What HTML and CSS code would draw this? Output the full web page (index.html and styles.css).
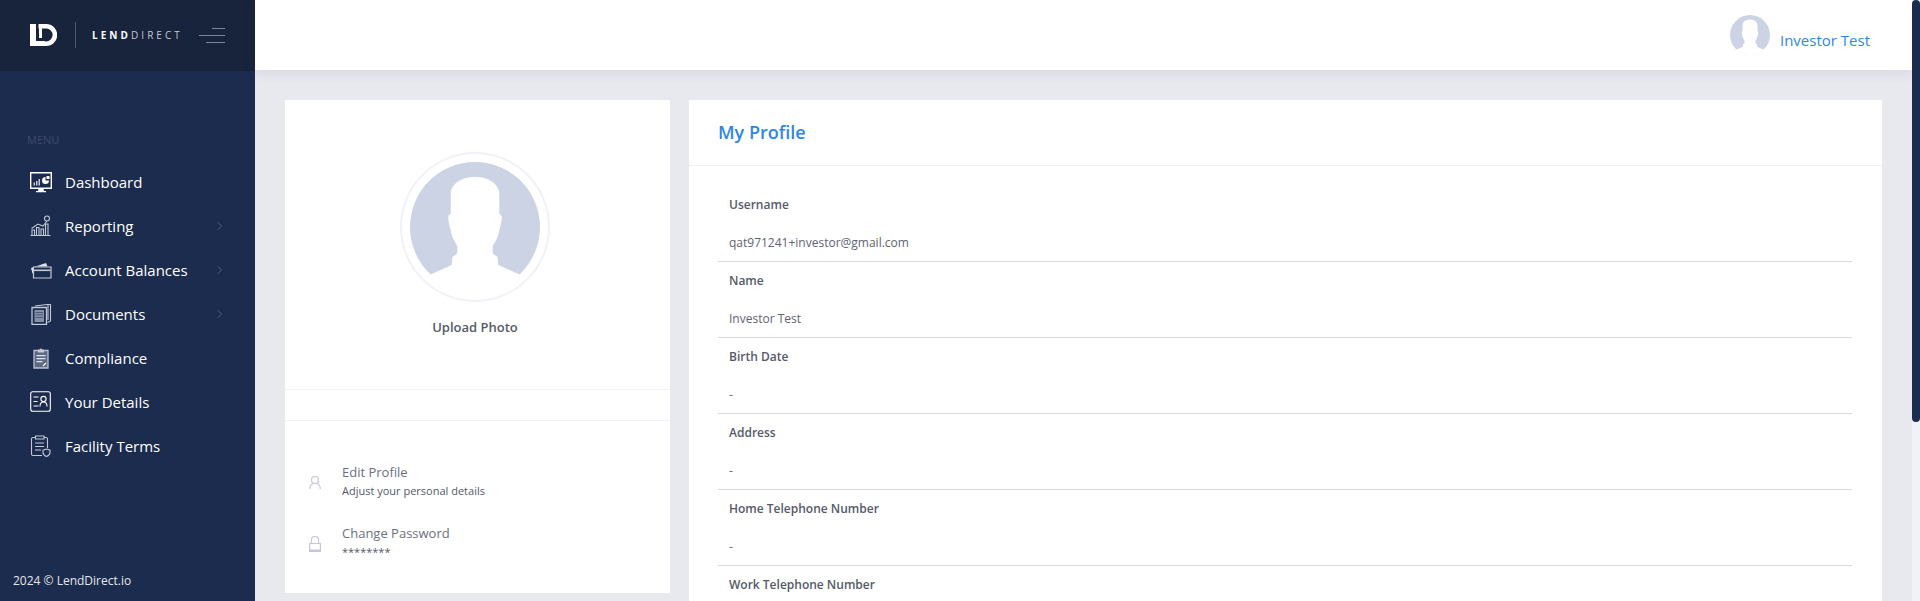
FILE: index.html

```html
<!DOCTYPE html>
<html lang="en">
<head>
    <meta charset="UTF-8">
    <title>LendDirect - My Profile</title>
    <link rel="stylesheet" href="styles.css">
</head>
<body>
    <svg class="defs" width="0" height="0">
        <symbol id="avatar" viewBox="0 0 150 150">
            <circle cx="75" cy="75" r="65" fill="#cbd3e4"/>
            <path fill="#fff" d="M29.5 123L51.7 113C52 109 52 106 52.7 104.7C54 103.5 57.3 103 57.3 100V94C55 90 51.5 85 50.7 78C49.5 74 48 68 48.3 64.7C48.5 63 50 62 50.7 62V41.3C51 33 60 25 75 24.7C90 25 99 33 99.3 41.3V62C100 62 101.5 63 101.7 64.7C102 68 100.5 74 99.3 78C98.5 85 95 90 92.7 94V100C92.7 103 96 103.5 97.3 104.7C98 106 98 109 98.3 113L120.5 123A66.2 66.2 0 0 1 29.5 123z"/>
        </symbol>
    </svg>

    <div class="layout">
        <aside class="sidebar">
            <div class="brand">
                <svg class="brand-mark" viewBox="0 0 27 22" width="27" height="22">
                    <path fill="#fff" d="M0 0h6v17h9v5H0z"/>
                    <path fill="none" stroke="#fff" stroke-width="4.6" d="M8.5 2.3h7.7a8.7 8.7 0 0 1 0 17.4H14"/>
                    <path fill="#fff" d="M9 2h3v12H9z"/>
                </svg>
                <span class="brand-line"></span>
                <span class="brand-name"><b>LEND</b>DIRECT</span>
                <span class="burger"><i></i><i></i><i></i></span>
            </div>

            <div class="menu-title">MENU</div>
            <nav class="menu">
                <a class="menu-item">
                    <svg class="menu-icon" viewBox="0 0 22 22" width="22" height="22">
                        <path fill="none" stroke="#fff" stroke-width="1.4" d="M.7 1.7h20.6v15.6H.7z"/>
                        <path fill="#fff" d="M8.5 17.5h5l.5 2.5h2v1.2H6V20h2z"/>
                        <path fill="#c5cad6" d="M3.5 11.5h1.500v3H3.500zM6 10h1.500v4.500H6zM8.500 8h1.500v6.500H8.500z"/>
                        <path fill="#fff" d="M15.500 6v3.500h3.500a3.500 3.500 0 1 1-3.500-3.500zM16.500 5h3v3h-3z"/>
                    </svg>
                    <span>Dashboard</span>
                </a>
                <a class="menu-item">
                    <svg class="menu-icon dim" viewBox="0 0 22 22" width="22" height="22">
                        <g fill="none" stroke="#c3c8d3" stroke-width="1.100">
                            <path d="M.5 20.500h20M2 20v-5h2.500v5M6.500 20v-7.500H9V20M11 20v-6h2.500v6M15.500 20V9H18v11"/>
                            <path d="M1.500 13.500L8 9l5 2 4-5"/>
                            <circle cx="17" cy="3.500" r="2.500"/>
                        </g>
                    </svg>
                    <span>Reporting</span>
                    <i class="chevron"></i>
                </a>
                <a class="menu-item">
                    <svg class="menu-icon" viewBox="0 0 22 22" width="22" height="22">
                        <path fill="#e3e6ec" d="M1 9l15-5 1.500 3.500H6v1.700L4 14.500H2.500z"/>
                        <path fill="#1c2c4e" stroke="#c3c8d3" stroke-width="1.200" d="M3.500 8h17.500v11H3.500z"/>
                        <path fill="#c3c8d3" d="M4 10.500h16.500v1.600H4z"/>
                    </svg>
                    <span>Account Balances</span>
                    <i class="chevron"></i>
                </a>
                <a class="menu-item">
                    <svg class="menu-icon dim" viewBox="0 0 22 22" width="22" height="22">
                        <path fill="none" stroke="#c3c8d3" stroke-width="1.100" d="M5 3l12-1.500h3.500V18l-3 1.500M18 1.700V17"/>
                        <path fill="#1c2c4e" stroke="#c3c8d3" stroke-width="1.300" d="M2 4.500h14.500v17H2z"/>
                        <path fill="#8690a6" d="M4.500 7h9.500v12H4.500z"/>
                        <path fill="#39486a" d="M5.500 9h7.500v.800H5.500zM5.500 11.500h7.500v.800H5.500zM5.500 14h7.500v.800H5.500z"/>
                    </svg>
                    <span>Documents</span>
                    <i class="chevron"></i>
                </a>
                <a class="menu-item">
                    <svg class="menu-icon dim" viewBox="0 0 22 22" width="22" height="22">
                        <path fill="#5d6a85" stroke="#b9c0cd" stroke-width="1.300" d="M4 3.500h14v17.500H4z"/>
                        <path fill="#c3c8d3" d="M8 2.500h2l1-1.500 1 1.500h2v3H8z"/>
                        <path fill="#dfe2e9" d="M6.500 8h9v1.200h-9zM6.500 11h9v1.200h-9zM6.500 14h6v1.200h-6z"/>
                        <path fill="none" stroke="#fff" stroke-width="1.200" d="M13 19l3-3"/>
                    </svg>
                    <span>Compliance</span>
                </a>
                <a class="menu-item">
                    <svg class="menu-icon" viewBox="0 0 22 22" width="22" height="22">
                        <rect x=".7" y=".7" width="19.600" height="19.600" rx="2" fill="none" stroke="#fff" stroke-width="1.100"/>
                        <path fill="none" stroke="#fff" stroke-width="1.100" d="M3.500 6h5M3.500 10.500h4M3.500 15h5"/>
                        <circle cx="13.500" cy="8" r="2.600" fill="none" stroke="#fff" stroke-width="1.100"/>
                        <path fill="none" stroke="#fff" stroke-width="1.100" d="M10 15.500c0-6 7-6 7 0"/>
                    </svg>
                    <span>Your Details</span>
                </a>
                <a class="menu-item">
                    <svg class="menu-icon dim" viewBox="0 0 22 22" width="22" height="22">
                        <path fill="none" stroke="#c3c8d3" stroke-width="1.100" d="M12 20.500H3c-1 0-1.500-.5-1.500-1.500V4c0-1 .5-1.500 1.500-1.500h2M14 2.500h2c1 0 1.500.5 1.500 1.500v9"/>
                        <path fill="none" stroke="#c3c8d3" stroke-width="1.100" d="M5.500 1h8.500v3H5.500zM5 8h9M5 11.500h9M5 15h6"/>
                        <path fill="none" stroke="#c3c8d3" stroke-width="1.100" d="M16.500 14l3.500 1.200v2.300c0 2-1.500 3.200-3.500 4-2-.8-3.500-2-3.500-4v-2.300z"/>
                    </svg>
                    <span>Facility Terms</span>
                </a>
            </nav>
            <div class="copyright">2024 © LendDirect.io</div>
        </aside>

        <div class="page">
            <header class="topbar">
                <svg class="top-avatar" width="46" height="46"><use href="#avatar"/></svg>
                <span class="top-user">Investor Test</span>
            </header>

            <main class="content">
                <section class="card side-card">
                    <div class="photo">
                        <div class="photo-ring"><svg width="150" height="150"><use href="#avatar"/></svg></div>
                        <div class="photo-label">Upload Photo</div>
                    </div>
                    <div class="side-gap"></div>
                    <div class="side-links">
                        <div class="side-link">
                            <svg class="side-icon" viewBox="0 0 12 16" width="12" height="16">
                                <circle cx="6" cy="5" r="3.500" fill="none" stroke="#c6c5dc" stroke-width="1.200"/>
                                <path fill="none" stroke="#c6c5dc" stroke-width="1.200" d="M.7 14c0-3 2-5 3.300-5.500M11.300 14c0-3-2-5-3.300-5.500"/>
                            </svg>
                            <div>
                                <div class="side-title">Edit Profile</div>
                                <div class="side-sub">Adjust your personal details</div>
                            </div>
                        </div>
                        <div class="side-link">
                            <svg class="side-icon" viewBox="0 0 12 16" width="12" height="16">
                                <path fill="none" stroke="#c6c5dc" stroke-width="1.200" d="M2.500 8V4a3.500 3.500 0 0 1 7 0v4"/>
                                <path fill="#fff" stroke="#c6c5dc" stroke-width="1.200" d="M.6 7.500h10.800v7.900H.6z"/>
                                <path fill="#c6c5dc" d="M.6 13.500h10.800v1.900H.6z"/>
                            </svg>
                            <div>
                                <div class="side-title">Change Password</div>
                                <div class="side-sub">********</div>
                            </div>
                        </div>
                    </div>
                </section>

                <section class="card profile-card">
                    <h1 class="profile-head">My Profile</h1>
                    <div class="fields">
                        <div class="field">
                            <div class="field-label">Username</div>
                            <div class="field-value">qat971241+investor@gmail.com</div>
                        </div>
                        <div class="field">
                            <div class="field-label">Name</div>
                            <div class="field-value">Investor Test</div>
                        </div>
                        <div class="field">
                            <div class="field-label">Birth Date</div>
                            <div class="field-value">-</div>
                        </div>
                        <div class="field">
                            <div class="field-label">Address</div>
                            <div class="field-value">-</div>
                        </div>
                        <div class="field">
                            <div class="field-label">Home Telephone Number</div>
                            <div class="field-value">-</div>
                        </div>
                        <div class="field">
                            <div class="field-label">Work Telephone Number</div>
                        </div>
                    </div>
                </section>
            </main>
        </div>

        <div class="scrollbar"><div class="scroll-thumb"></div></div>
    </div>
</body>
</html>
```

FILE: styles.css

```css
html, body {
    margin: 0;
    padding: 0;
    height: 100%;
    overflow: hidden;
    font-family: "Open Sans", "Noto Sans", sans-serif;
    background-color: #e8e9ef;
}
.defs {
    position: absolute;
}
.layout {
    display: flex;
    height: 100vh;
    position: relative;
}

/* sidebar */
.sidebar {
    width: 255px;
    flex: none;
    background-color: #1c2c4e;
    display: flex;
    flex-direction: column;
}
.brand {
    height: 71px;
    flex: none;
    background-color: #18233c;
    display: flex;
    align-items: center;
    padding: 0 0 1px 30px;
    box-sizing: border-box;
}
.brand-mark {
    flex: none;
}
.brand-line {
    width: 1px;
    height: 26px;
    margin-left: 18px;
    background-color: #4b566f;
}
.brand-name {
    margin-left: 16px;
    font-size: 10px;
    letter-spacing: 3.05px;
    color: #c5c8d0;
    width: 107px;
    white-space: nowrap;
}
.brand-name b {
    color: #fff;
    font-weight: 700;
}
.burger {
    display: flex;
    flex-direction: column;
    align-items: flex-end;
    gap: 6px;
    width: 26px;
}
.burger i {
    display: block;
    height: 1px;
    background-color: #7d8699;
}
.burger i:nth-child(1) {
    width: 13px;
}
.burger i:nth-child(2) {
    width: 26px;
}
.burger i:nth-child(3) {
    width: 19px;
}
.menu-title {
    margin: 61px 0 0 27px;
    font-size: 11px;
    line-height: 16px;
    color: #3d4b6c;
}
.menu {
    margin-top: 12px;
}
.menu-item {
    display: flex;
    align-items: center;
    height: 44px;
    padding-left: 30px;
    color: #fff;
    font-size: 15px;
}
.menu-icon {
    flex: none;
    margin-right: 13px;
}
.chevron {
    width: 5px;
    height: 5px;
    margin-left: auto;
    margin-right: 34px;
    border-top: 1px solid #3f4e70;
    border-right: 1px solid #3f4e70;
    transform: rotate(45deg);
}
.copyright {
    margin-top: auto;
    padding: 0 0 11px 13px;
    font-size: 12px;
    line-height: 18px;
    color: #e4e6ec;
}

/* top bar */
.page {
    flex: 1;
    min-width: 0;
    padding-right: 8px;
    display: flex;
    flex-direction: column;
}
.topbar {
    height: 70px;
    flex: none;
    box-sizing: border-box;
    background-color: #fff;
    box-shadow: 0 2px 12px rgba(60, 65, 90, 0.12);
    display: flex;
    align-items: center;
    justify-content: flex-end;
    padding-right: 42px;
}
.top-avatar {
    margin-right: 7px;
}
.top-user {
    font-size: 15px;
    color: #2f86e6;
    margin-top: 10px;
}

/* cards */
.content {
    flex: 1;
    min-height: 0;
    display: flex;
    align-items: flex-start;
    gap: 19px;
    padding: 30px 30px 0;
}
.card {
    background-color: #fff;
}
.side-card {
    width: 385px;
    flex: none;
}
.photo {
    padding: 52px 5px 52px 0;
    text-align: center;
}
.photo-ring {
    width: 150px;
    height: 150px;
    margin: 0 auto;
    border-radius: 50%;
    box-sizing: border-box;
    box-shadow: inset 0 0 0 2px #f1f2f7;
}
.photo-ring svg {
    display: block;
}
.photo-label {
    margin-top: 15px;
    font-size: 13px;
    line-height: 20px;
    font-weight: 600;
    color: #555a68;
}
.side-gap {
    height: 30px;
    border-top: 1px solid #f1f2f6;
    border-bottom: 1px solid #f1f2f6;
}
.side-links {
    padding: 41px 24px 32px;
}
.side-link {
    display: flex;
    align-items: center;
    margin-bottom: 23px;
}
.side-link:last-child {
    margin-bottom: 0;
}
.side-icon {
    flex: none;
    margin: 3px 21px 0 0;
}
.side-title {
    font-size: 13px;
    line-height: 20px;
    color: #6c6f80;
}
.side-sub {
    font-size: 11px;
    line-height: 18px;
    color: #555a68;
}
.profile-card {
    flex: 1;
    min-width: 0;
    align-self: stretch;
}
.profile-head {
    margin: 0;
    height: 66px;
    padding-left: 29px;
    box-sizing: border-box;
    border-bottom: 1px solid #eef0f3;
    font-size: 18px;
    font-weight: 600;
    line-height: 64px;
    color: #2f86e6;
}
.fields {
    padding: 20px 30px 0 29px;
}
.field {
    height: 76px;
    box-sizing: border-box;
    padding: 9px 0 0 11px;
    border-bottom: 1px solid #d9dadd;
}
.field:last-child {
    height: auto;
    border-bottom: none;
}
.field-label {
    font-size: 12px;
    line-height: 20px;
    font-weight: 600;
    color: #555a68;
}
.field-value {
    margin-top: 18px;
    font-size: 12px;
    line-height: 20px;
    color: #60636f;
}

/* fake scrollbar on the right edge */
.scrollbar {
    position: absolute;
    top: 0;
    right: 0;
    bottom: 0;
    width: 8px;
    background-color: #f1f1f7;
}
.scroll-thumb {
    height: 422px;
    background-color: #1c2c4e;
    border-radius: 4px;
}
```
